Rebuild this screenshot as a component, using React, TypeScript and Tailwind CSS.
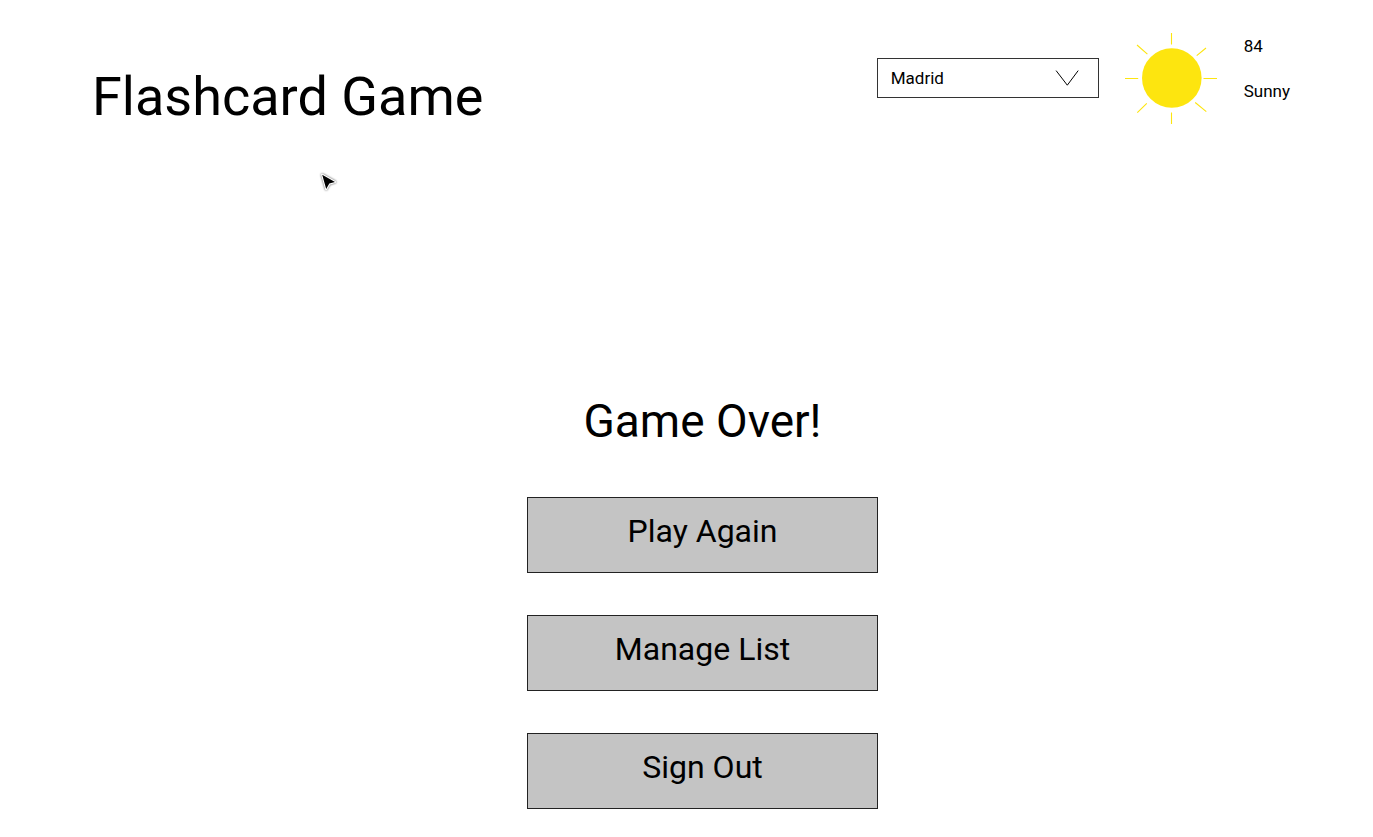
import React from "react";

const actions = ["Play Again", "Manage List", "Sign Out"];
const cities = ["Madrid", "Paris", "London"];

function Sun() {
  return (
    <svg viewBox="0 0 92 92" className="size-[92px] shrink-0" role="img" aria-label="Sun">
      <circle cx="46.8" cy="46" r="29.8" fill="#fde50f" />
      <path
        d="M46.5 1V12.5M46.5 80.5V92M0 46.5H13.2M78.5 46.5H92M12 13L22.4 22.2M81 16L71.7 23.7M12.3 80.7L21.8 71.3M70.2 70.5L81.3 79.7"
        fill="none"
        stroke="#fde50f"
        strokeWidth="1.1"
      />
    </svg>
  );
}

function CitySelect() {
  return (
    <div className="relative">
      <select
        aria-label="City"
        className="block h-10 w-[222px] appearance-none rounded-none border border-[#333] bg-white px-[13px] text-[17px] leading-7 text-black"
      >
        {cities.map((city) => (
          <option key={city}>{city}</option>
        ))}
      </select>
      <svg
        viewBox="0 0 24 16"
        className="pointer-events-none absolute top-3 right-5 h-4 w-6"
        fill="none"
        stroke="#000"
        strokeWidth="1"
        aria-hidden="true"
      >
        <path d="M1.1 0.6L12.3 15.2L23.2 0.6" />
      </svg>
    </div>
  );
}

function Pointer() {
  return (
    <svg
      viewBox="0 0 20 22"
      className="pointer-events-none absolute top-[172px] left-[319px] h-[22px] w-5 drop-shadow-[0_0_1px_rgba(0,0,0,0.7)]"
      aria-hidden="true"
    >
      <path
        d="M3.2 2.8L16 10L10.3 11.6L7.2 17Z"
        fill="#000"
        stroke="#fff"
        strokeWidth="2.2"
        strokeLinejoin="round"
        paintOrder="stroke"
      />
    </svg>
  );
}

export default function App() {
  return (
    <div className="relative min-h-screen bg-white pb-7 font-['Roboto','Liberation_Sans',sans-serif] text-black">
      <header className="flex items-start justify-between pt-8 pr-[83px] pl-[92px]">
        <h1 className="mt-[33px] text-[54px] leading-[64px]">Flashcard Game</h1>
        <div className="flex items-center">
          <CitySelect />
          <div className="ml-[26px] flex gap-[27px]">
            <Sun />
            <div className="flex flex-col gap-[17px] text-[17px] leading-7">
              <span>84</span>
              <span>Sunny</span>
            </div>
          </div>
        </div>
      </header>

      <main className="mt-[264px] flex flex-col items-center pl-8">
        <h2 className="text-[46px] leading-[56px]">Game Over!</h2>
        <div className="mt-12 flex flex-col gap-[42px]">
          {actions.map((label) => (
            <button
              key={label}
              type="button"
              className="h-[76px] w-[351px] border border-[#222] bg-[#c4c4c4] pb-2 text-[32px] leading-10"
            >
              {label}
            </button>
          ))}
        </div>
      </main>
      <Pointer />
    </div>
  );
}
